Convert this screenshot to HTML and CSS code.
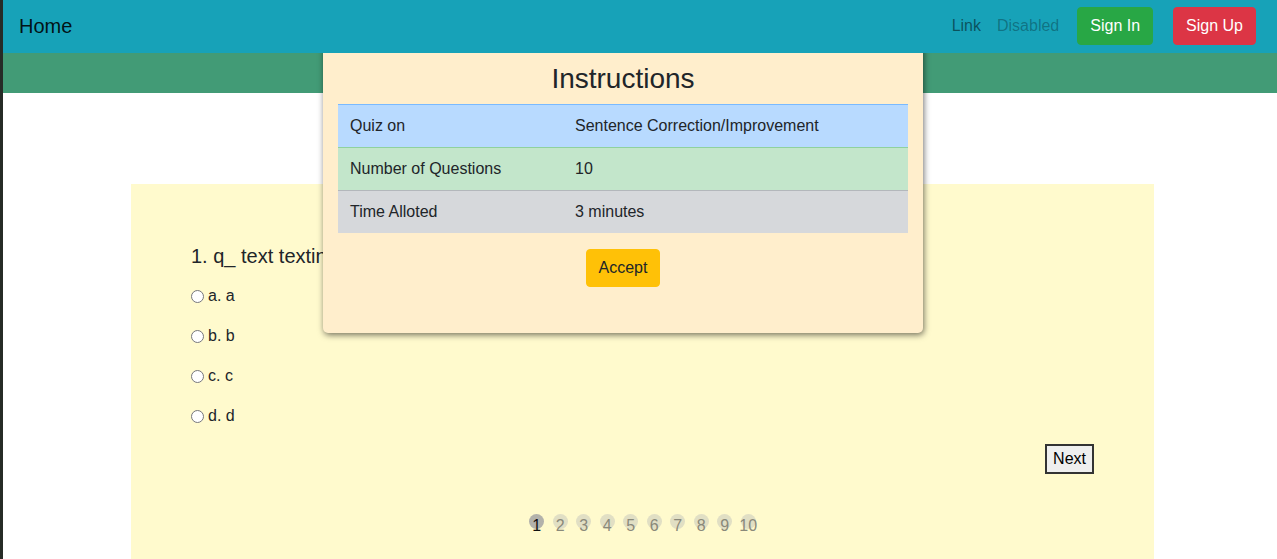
FILE: index.html
```html
<!DOCTYPE html>
<html lang="en">
<head>
<meta charset="utf-8">
<title>Quiz</title>
<link rel="stylesheet" href="styles.css">
</head>
<body>
<div class="page">
  <nav class="navbar">
    <a class="brand" href="#">Home</a>
    <div class="nav-right">
      <a class="nav-link" href="#">Link</a>
      <span class="nav-link disabled">Disabled</span>
      <button class="btn btn-success signin">Sign In</button>
      <button class="btn btn-danger signup">Sign Up</button>
    </div>
  </nav>
  <div class="greenbar"></div>

  <main class="main">
    <section class="quiz">
      <h5 class="question">1. q_ text texting text texting text</h5>
      <label class="option"><input type="radio" name="q1"> a. a</label>
      <label class="option"><input type="radio" name="q1"> b. b</label>
      <label class="option"><input type="radio" name="q1"> c. c</label>
      <label class="option"><input type="radio" name="q1"> d. d</label>
      <div class="next-row"><button class="next">Next</button></div>
      <div class="pager">
        <span class="dot active">1</span>
        <span class="dot">2</span>
        <span class="dot">3</span>
        <span class="dot">4</span>
        <span class="dot">5</span>
        <span class="dot">6</span>
        <span class="dot">7</span>
        <span class="dot">8</span>
        <span class="dot">9</span>
        <span class="dot">10</span>
      </div>
    </section>
  </main>

  <div class="modal">
    <h3 class="modal-title">Instructions</h3>
    <table class="info">
      <colgroup><col class="c1"><col class="c2"></colgroup>
      <tr class="row-primary"><td>Quiz on</td><td>Sentence Correction/Improvement</td></tr>
      <tr class="row-success"><td>Number of Questions</td><td>10</td></tr>
      <tr class="row-secondary"><td>Time Alloted</td><td>3 minutes</td></tr>
    </table>
    <div class="accept-row"><button class="btn btn-warning">Accept</button></div>
  </div>
</div>
</body>
</html>
```

FILE: styles.css
```css
* { box-sizing: border-box; }

html, body {
  margin: 0;
  padding: 0;
}

body {
  background: #262b26;
  font-family: "Liberation Sans", Arial, sans-serif;
  font-size: 16px;
  line-height: 1.5;
  color: #212529;
}

.page {
  margin-left: 3px;
  background: #ffffff;
  height: 559px;
  position: relative;
  overflow: hidden;
}

/* navbar */
.navbar {
  position: relative;
  z-index: 2;
  height: 53px;
  background: #17a2b8;
  display: flex;
  align-items: flex-start;
  padding: 7px 21px 0 16px;
}

.brand {
  font-size: 20px;
  line-height: 30px;
  margin-top: 4px;
  color: rgba(0, 0, 0, 0.9);
  text-decoration: none;
}

.nav-right {
  margin-left: auto;
  display: flex;
  align-items: center;
}

.nav-link {
  padding: 0 8px;
  color: rgba(0, 0, 0, 0.5);
  text-decoration: none;
}

.nav-link.disabled {
  color: rgba(0, 0, 0, 0.3);
}

.btn {
  font-family: inherit;
  font-size: 16px;
  line-height: 24px;
  padding: 6px 12px;
  border: 1px solid transparent;
  border-radius: 4px;
  cursor: pointer;
}

.btn-success {
  background: #28a745;
  border-color: #28a745;
  color: #fff;
}

.btn-danger {
  background: #dc3545;
  border-color: #dc3545;
  color: #fff;
}

.btn-warning {
  background: #ffc107;
  border-color: #ffc107;
  color: #212529;
}

.signin { margin-left: 10px; }
.signup { margin-left: 20px; }

.greenbar {
  height: 40px;
  background: #429b76;
}

/* main quiz */
.main {
  padding-top: 91px;
}

.quiz {
  margin-left: 128px;
  width: 1023px;
  min-height: 400px;
  background: #fffacd;
  padding: 60px;
}

.question {
  font-size: 20px;
  line-height: 24px;
  font-weight: 400;
  margin: 0 0 16px;
  white-space: nowrap;
}

.option {
  display: flex;
  align-items: center;
  height: 24px;
  margin-bottom: 16px;
}

.option input {
  width: 13px;
  height: 13px;
  margin: 0 4px 0 0;
}

.next-row {
  display: flex;
  justify-content: flex-end;
}

.next {
  font-family: inherit;
  font-size: 16px;
  line-height: 18px;
  height: 30px;
  padding: 4px 6px;
  background: #efefef;
  color: #000;
  border: 2px solid #333;
  border-radius: 0;
}

.pager {
  margin-top: 40px;
  display: flex;
  justify-content: center;
  gap: 8.5px;
}

.dot {
  width: 15px;
  height: 15px;
  border-radius: 50%;
  background: #e1dfc4;
  color: #8a897a;
  text-align: center;
  line-height: 23px;
  white-space: nowrap;
  display: flex;
  justify-content: center;
}

.dot.active {
  background: #b3b2ab;
  color: #111;
}

/* modal overlay */
.modal {
  position: absolute;
  z-index: 1;
  left: 320px;
  top: 44px;
  width: 600px;
  background: #ffeecc;
  border-radius: 5px;
  padding: 18px 15px 46px;
  box-shadow: 1px 2px 6px rgba(0, 0, 0, 0.55);
}

.modal-title {
  font-size: 28px;
  line-height: 1.2;
  font-weight: 400;
  margin: 0 0 8px;
  text-align: center;
}

.info {
  width: 100%;
  border-collapse: collapse;
  table-layout: fixed;
}

.info .c1 { width: 225px; }

.info td {
  padding: 9px 12px;
  border-top: 1px solid transparent;
  line-height: 24px;
}

.row-primary td { background: #b8daff; border-top-color: #7abaff; }
.row-success td { background: #c3e6cb; border-top-color: #8fd19e; }
.row-secondary td { background: #d6d8db; border-top-color: #b3b7bb; }

.accept-row {
  margin-top: 16px;
  text-align: center;
}
```
